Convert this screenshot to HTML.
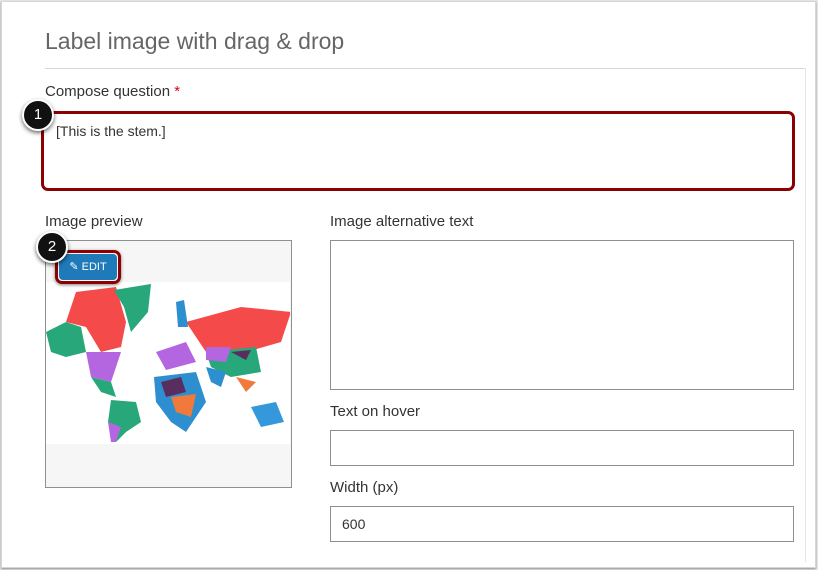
<!DOCTYPE html>
<html><head><style>
body{margin:0;width:818px;height:570px;background:#e9e9e9;font-family:"Liberation Sans",sans-serif;position:relative;overflow:hidden}
.card{position:absolute;left:1px;top:1px;width:813px;height:565px;background:#fff;border:1px solid #d6d6d6;box-shadow:0 1px 2px rgba(0,0,0,.4)}
.a{position:absolute}
.lbl{font-size:15px;color:#333}
.box{position:absolute;border:1px solid #8f8f8f;background:#fff}
.badge{position:absolute;width:28px;height:28px;border-radius:50%;background:#111;border:2px solid #fff;color:#fff;font-size:15px;text-align:center;line-height:28px;box-shadow:0 2px 4px rgba(0,0,0,.6)}
</style></head><body>
<div class="card"></div>
<div class="a" style="left:45px;top:28px;font-size:23px;color:#666">Label image with drag &amp; drop</div>
<div class="a" style="left:45px;top:68px;width:760px;height:1px;background:#d8d8d8"></div>
<div class="a" style="left:805px;top:68px;width:1px;height:494px;background:#e4e4e4"></div>
<div class="a lbl" style="left:45px;top:83px">Compose question <span style="color:#d0021b">*</span></div>
<div class="a" style="left:41px;top:111px;width:748px;height:74px;border:3px solid #8b0000;border-radius:7px"></div>
<div class="a" style="left:56px;top:123px;font-size:14px;color:#333">[This is the stem.]</div>
<div class="badge" style="left:22px;top:99px">1</div>
<div class="a lbl" style="left:45px;top:213px">Image preview</div>
<div class="box" style="left:45px;top:240px;width:245px;height:246px;background:#f6f6f6"></div>
<div class="a" style="left:46px;top:282px;width:244px;height:162px;background:#fff">
<svg width="244" height="162" viewBox="0 0 244 162">
<path d="M30 10 L70 5 L80 40 L75 65 L55 70 L40 45 L20 40 Z" fill="#f44a4a"/>
<path d="M68 8 L105 2 L102 30 L85 50 L78 25 Z" fill="#27a77a"/>
<path d="M0 50 L20 40 L35 45 L40 70 L20 75 L5 70 Z" fill="#27a77a"/>
<path d="M40 70 L75 70 L65 100 L45 95 Z" fill="#b466e0"/>
<path d="M45 95 L65 100 L70 115 L55 110 Z" fill="#27a77a"/>
<path d="M65 118 L90 120 L95 140 L80 150 L70 160 L62 140 Z" fill="#27a77a"/>
<path d="M62 140 L75 145 L70 160 L65 160 Z" fill="#b466e0"/>
<path d="M108 95 L150 90 L160 120 L140 150 L125 140 L110 120 Z" fill="#2e8fd0"/>
<path d="M115 100 L135 95 L140 110 L120 115 Z" fill="#5a2d5f"/>
<path d="M125 115 L150 112 L145 135 L130 130 Z" fill="#f07a3c"/>
<path d="M110 70 L140 60 L150 80 L120 88 Z" fill="#b466e0"/>
<path d="M140 40 L195 25 L245 30 L235 60 L200 70 L160 70 Z" fill="#f44a4a"/>
<path d="M160 70 L210 65 L215 90 L185 95 L165 85 Z" fill="#27a77a"/>
<path d="M160 65 L185 65 L180 80 L160 78 Z" fill="#b466e0"/>
<path d="M185 70 L205 68 L200 78 Z" fill="#5a2d5f"/>
<path d="M160 85 L180 90 L175 105 L165 100 Z" fill="#2e8fd0"/>
<path d="M190 95 L210 100 L200 110 Z" fill="#f07a3c"/>
<path d="M205 125 L230 120 L238 140 L215 145 Z" fill="#3598db"/>
<path d="M130 20 L138 18 L142 45 L132 45 Z" fill="#2e8fd0"/>
</svg></div>
<div class="a" style="left:55px;top:250px;width:66px;height:34px;border:3px solid #8b0000;border-radius:7px;box-sizing:border-box;box-shadow:0 1px 3px rgba(0,0,0,.5)"><div style="margin:1px;height:26px;background:#1e7ab8;border-radius:4px;color:#fff;font-size:11px;line-height:26px;text-align:center">✎ EDIT</div></div>
<div class="badge" style="left:36px;top:231px">2</div>
<div class="a lbl" style="left:330px;top:213px">Image alternative text</div>
<div class="box" style="left:330px;top:240px;width:462px;height:148px"></div>
<div class="a lbl" style="left:330px;top:403px">Text on hover</div>
<div class="box" style="left:330px;top:430px;width:462px;height:34px"></div>
<div class="a lbl" style="left:330px;top:479px">Width (px)</div>
<div class="box" style="left:330px;top:506px;width:462px;height:34px"></div>
<div class="a" style="left:342px;top:516px;font-size:14px;color:#333">600</div>
</body></html>
